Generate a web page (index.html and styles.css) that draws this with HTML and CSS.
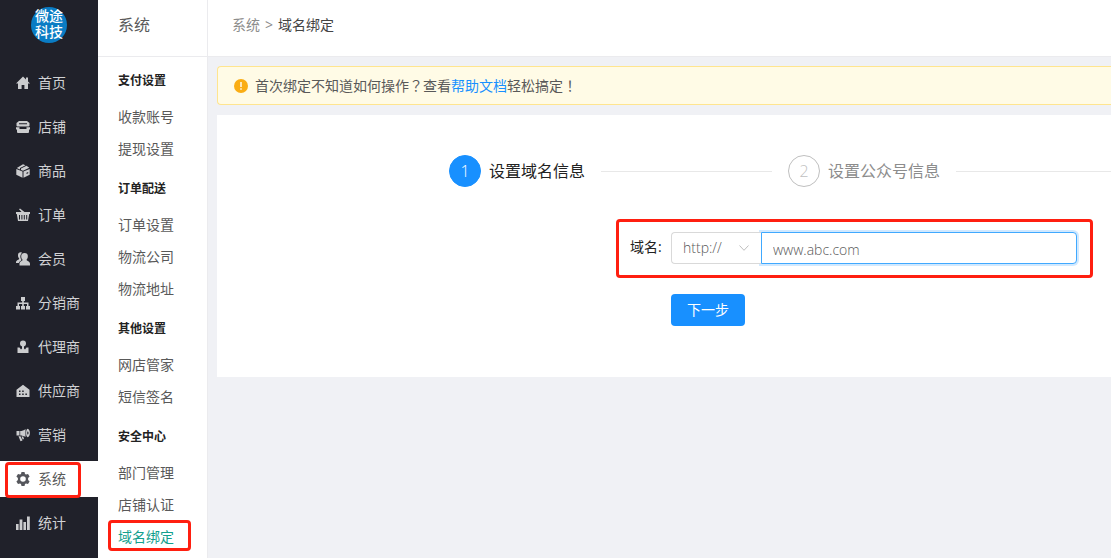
FILE: index.html
```
<!doctype html>
<html lang="zh-CN">
<head>
	<meta charset="UTF-8">
	<title>域名绑定</title>
	<link rel="stylesheet" href="styles.css">
</head>
<body>
<div class="layout">
	<div class="rail">
		<a href="#" class="logo"><span>微途</span><span>科技</span></a>
		<ul class="nav">
			<li><a href="#"><svg viewBox="0 0 14 14"><path d="M7 .5L0 7.500h2V13h3.600V9h2.800v4H12V7.500h2L12 5.500V1.500h-2v2z"/></svg>首页</a></li>
			<li><a href="#"><svg viewBox="0 0 14 14"><path d="M3 1h8l2.500 2v2.500q0 1-1 1h-11q-1 0-1-1V3zM3 3.300v1h8v-1zM0 7.300h3.500V9h7V7.300H14V9.500h-1V12q0 1-1 1H2q-1 0-1-1V9.500H0z" fill-rule="evenodd"/></svg>店铺</a></li>
			<li><a href="#"><svg viewBox="0 0 14 14"><path d="M7 .3l2.500 1L4 3.900v1.500L.8 4zM10.500 1.800l2.800 1.900L7 6.700 5 5.900V4.500zM.3 4.900l6.200 2.700v6.100L.3 10.800zM13.700 4.900v5.900l-6.200 2.900V7.600zM10.500 8.800V10l1.700-.8V8z" fill-rule="evenodd"/></svg>商品</a></li>
			<li><a href="#"><svg viewBox="0 0 14 14"><path d="M3 1.300l1-.9L8.500 4H14v2h-.8L12 13H2L.8 6H0V4h5.600zM3 7v4.500h1V7zM5.400 7v4.500h1V7zM7.800 7v4.500h1V7zM10.200 7v4.500h1V7z" fill-rule="evenodd"/></svg>订单</a></li>
			<li><a href="#"><svg viewBox="0 0 14 14"><path d="M8.500 1C11 1 12 2.500 11.800 4.500c0 1.800-.8 2.500-1.300 3.300.2 1.200 3.500 1.700 3.500 4V13.500H3.500v-1.700c0-2.300 3-2.800 3.200-4C5.500 7 5.200 5.500 5.200 4.200 5.200 2 6.500 1 8.500 1z"/><path d="M6 .7C4.300-.2 1.800.5 2 3.500c0 1.700.6 2.300 1.200 3C3.200 8 0 8 0 10.200V11h2.800c.5-1.700 2-2 2.700-3C4.500 6.800 3.300 3.500 6 .7z"/></svg>会员</a></li>
			<li><a href="#"><svg viewBox="0 0 14 14"><path d="M5 1h4v4H7.800v1.500H12.500V10H14v3.500h-4V10h1V8H7.800v2H9v3.500H5V10h1.200V8H3v2h1v3.500H0V10h1.500V6.500h4.700V5H5z"/></svg>分销商</a></li>
			<li><a href="#"><svg viewBox="0 0 14 14"><circle cx="7" cy="3.500" r="3"/><path d="M6 6h2v2.500l1 1L10.500 7.500h2V13h-11V7.500h2L5 9.500l1-1z"/></svg>代理商</a></li>
			<li><a href="#"><svg viewBox="0 0 14 14"><path d="M7 .8l6.500 5V13H.5V5.800zM3 6.500v1.600h1.500V6.500zM3 9.500V11h1.500V9.500zM6.200 9.500V11h1.500V9.500zM9.400 9.500V11h1.500V9.500zM6.200 6.500v1.600h1.500V6.500z" fill-rule="evenodd"/></svg>供应商</a></li>
			<li><a href="#"><svg viewBox="0 0 14 14"><path d="M.5 3h3v4.500h-3zM4.200 3C6 3 8 2.500 9.500 1v8C8 8 6 7.500 4.200 7.500zM2.500 8.300h2L6.500 12.500l-2 .7zM5.500 8.500h1.700L8 11l-1.300.5z"/><path d="M11.500.8C14.700 1.500 14.700 8.800 11.500 9.200 9.600 8.300 9.600 1.700 11.500.8zm.3 2.400c-.8.800-.8 2.600 0 3.500 1-.8 1-2.700 0-3.500z" fill-rule="evenodd"/></svg>营销</a></li>
			<li class="on"><a href="#"><svg viewBox="0 0 14 14"><path d="M5.500 0h3l.5 2 1 .6 2-.6 1.600 2.600-1.500 1.500v1.800l1.500 1.500L12 12l-2-.6-1 .6-.5 2h-3L5 12l-1-.6-2 .6L.4 9.400l1.500-1.500V6.100L.4 4.600 2 2l2 .6L5 2zM7 4.200a2.800 2.800 0 1 0 0 5.600 2.800 2.800 0 0 0 0-5.600z" fill-rule="evenodd"/></svg>系统</a></li>
			<li><a href="#"><svg viewBox="0 0 14 14"><path d="M0 8h2.600v6H0zM3.600 3.500h2.800V14H3.600zM7.400 6h2.600v8H7.400zM11 .5h2.800V14H11z"/></svg>统计</a></li>
		</ul>
	</div>

	<div class="side">
		<h1>系统</h1>
		<div class="group">
			<h2>支付设置</h2>
			<ul>
				<li><a href="#">收款账号</a></li>
				<li><a href="#">提现设置</a></li>
			</ul>
		</div>
		<div class="group">
			<h2>订单配送</h2>
			<ul>
				<li><a href="#">订单设置</a></li>
				<li><a href="#">物流公司</a></li>
				<li><a href="#">物流地址</a></li>
			</ul>
		</div>
		<div class="group">
			<h2>其他设置</h2>
			<ul>
				<li><a href="#">网店管家</a></li>
				<li><a href="#">短信签名</a></li>
			</ul>
		</div>
		<div class="group">
			<h2>安全中心</h2>
			<ul>
				<li><a href="#">部门管理</a></li>
				<li><a href="#">店铺认证</a></li>
				<li class="on"><a href="#">域名绑定</a></li>
			</ul>
		</div>
	</div>

	<div class="main">
		<div class="crumb"><a href="#">系统</a><i>&gt;</i><span>域名绑定</span></div>
		<div class="content">
			<div class="alert">
				<svg viewBox="0 0 14 14"><circle cx="7" cy="7" r="7" fill="#faad14"/><path d="M6.300 3h1.400v5H6.300zM6.300 9.300h1.400v1.400H6.300z" fill="#fff"/></svg>
				<p>首次绑定不知道如何操作<span class="mark" lang="zh-TW">？</span>查看<a href="#">帮助文档</a>轻松搞定<span class="mark" lang="zh-TW">！</span></p>
			</div>
			<div class="card">
				<ol class="steps">
					<li class="on"><b>1</b>设置域名信息</li>
					<li><b>2</b>设置公众号信息</li>
				</ol>
				<form class="form">
					<div class="row">
						<label for="domain">域名:</label>
						<div class="protocol">
							<select aria-label="协议">
								<option>http://</option>
								<option>https://</option>
							</select>
							<svg viewBox="0 0 10 6"><path d="M.5.5L5 5.300 9.500.5" fill="none" stroke="#bfbfbf"/></svg>
						</div>
						<input type="text" id="domain" class="domain" value="www.abc.com">
					</div>
					<button type="button" class="btn">下一步</button>
				</form>
			</div>
		</div>
	</div>
</div>
</body>
</html>
```

FILE: styles.css
```
* {
	margin: 0;
	padding: 0;
	box-sizing: border-box;
}
body {
	font: 14px/20px "Open Sans", "Noto Sans CJK SC", sans-serif;
	color: #595959;
	background: #f0f1f5;
}
ul, ol {
	list-style: none;
}
a {
	color: inherit;
	text-decoration: none;
}
.layout {
	display: flex;
	min-height: 100vh;
}

/* 一级菜单 */
.rail {
	flex: none;
	width: 98px;
	padding-top: 7px;
	background: #20212a;
	color: #d0d1d4;
}
.logo {
	display: block;
	width: 36px;
	height: 36px;
	margin: 0 auto;
	padding-top: 1px;
	border-radius: 50%;
	background: #0a7cc4;
	color: #fff;
	font-size: 14px;
	font-weight: 500;
	line-height: 16px;
	text-align: center;
}
.logo span {
	display: block;
}
.nav {
	padding-top: 22px;
}
.nav li {
	position: relative;
	margin-bottom: 8px;
}
.nav a {
	display: flex;
	align-items: center;
	height: 36px;
	padding-left: 16px;
}
.nav svg {
	width: 14px;
	height: 14px;
	margin-right: 8px;
	fill: #cbccce;
}
.nav .on {
	background: #fff;
	color: #595959;
}
.nav .on svg {
	fill: #55565c;
}
.nav .on:after, .side .on:after {
	content: "";
	position: absolute;
	box-sizing: border-box;
	border: 3px solid #ff1f10;
	border-radius: 4px;
	pointer-events: none;
}
.nav .on:after {
	top: 1px;
	bottom: -1px;
	left: 5px;
	width: 76px;
}

/* 二级菜单 */
.side {
	flex: none;
	width: 110px;
	background: #fff;
	border-right: 1px solid #ebebee;
}
.side h1 {
	height: 57px;
	margin-bottom: 4px;
	padding-left: 20px;
	border-bottom: 1px solid #ebebee;
	font-size: 16px;
	font-weight: 400;
	line-height: 50px;
}
.group {
	padding: 0 0 4px 20px;
}
.group h2 {
	color: #222;
	font-size: 12px;
	font-weight: 700;
	line-height: 40px;
}
.group li {
	position: relative;
	line-height: 32px;
}
.side .on {
	color: #13a08e;
}
.side .on:after {
	top: -1px;
	bottom: 2px;
	left: -10px;
	width: 83px;
}

.main {
	flex: 1;
	min-width: 0;
}
.crumb {
	height: 57px;
	padding-left: 24px;
	background: #fff;
	border-bottom: 1px solid #ebebee;
	line-height: 50px;
}
.crumb a {
	color: #8c8c8c;
}
.crumb i {
	margin: 0 5px;
	color: #8c8c8c;
	font-style: normal;
}
.crumb span {
	color: #444;
}
.content {
	padding: 9px 0 0 9px;
}
.alert {
	display: flex;
	align-items: center;
	height: 39px;
	margin-bottom: 10px;
	padding-left: 16px;
	border: 1px solid #ffe58f;
	border-right: 0;
	border-radius: 4px 0 0 4px;
	background: #fffbe6;
}
.alert svg {
	width: 14px;
	height: 14px;
	margin-right: 7px;
}
.alert a {
	color: #1890ff;
}
/* 标点居中 */
.mark {
	font-family: "Noto Sans CJK TC", sans-serif;
}

.card {
	padding: 40px 0 51px;
	background: #fff;
}
.steps {
	display: flex;
	gap: 16px;
	margin: 0 0 32px 232px;
}
.steps li {
	display: flex;
	flex: 1;
	align-items: center;
	color: #8c8c8c;
	font-size: 16px;
	white-space: nowrap;
}
.steps li:after {
	content: "";
	flex: 1;
	height: 1px;
	margin-left: 16px;
	background: #e8e8e8;
}
.steps b {
	width: 32px;
	height: 32px;
	margin-right: 8px;
	border: 1px solid #bfbfbf;
	border-radius: 50%;
	color: #bfbfbf;
	font-weight: 300;
	line-height: 30px;
	text-align: center;
}
.steps .on {
	color: #222;
}
.steps .on b {
	border-color: #1890ff;
	background: #1890ff;
	color: #fff;
}

.form {
	margin: 0 18px 0 399px;
}
.row {
	display: flex;
	padding: 10px 13px 11px 11px;
	border: 3px solid #ff1f10;
	border-radius: 4px;
}
.row label {
	width: 41px;
	color: #222;
	line-height: 30px;
}
.protocol {
	position: relative;
	width: 90px;
}
.protocol select {
	width: 100%;
	height: 32px;
	padding-left: 11px;
	border: 1px solid #d9d9d9;
	border-right: 0;
	border-radius: 4px 0 0 4px;
	background: #fff;
	color: #595959;
	font: inherit;
	font-weight: 300;
	appearance: none;
}
.protocol svg {
	position: absolute;
	top: 13px;
	right: 12px;
	width: 10px;
	height: 6px;
	pointer-events: none;
}
.domain {
	flex: 1;
	min-width: 0;
	height: 32px;
	padding: 2px 11px 0;
	border: 1px solid #40a9ff;
	border-radius: 0 4px 4px 0;
	box-shadow: 0 0 0 2px rgba(24, 144, 255, .2);
	outline: 0;
	color: #595959;
	font: inherit;
	font-weight: 300;
}
.btn {
	height: 32px;
	margin: 16px 0 0 55px;
	padding: 0 16px;
	border: 0;
	border-radius: 4px;
	background: #1890ff;
	color: #fff;
	font: inherit;
}
```
